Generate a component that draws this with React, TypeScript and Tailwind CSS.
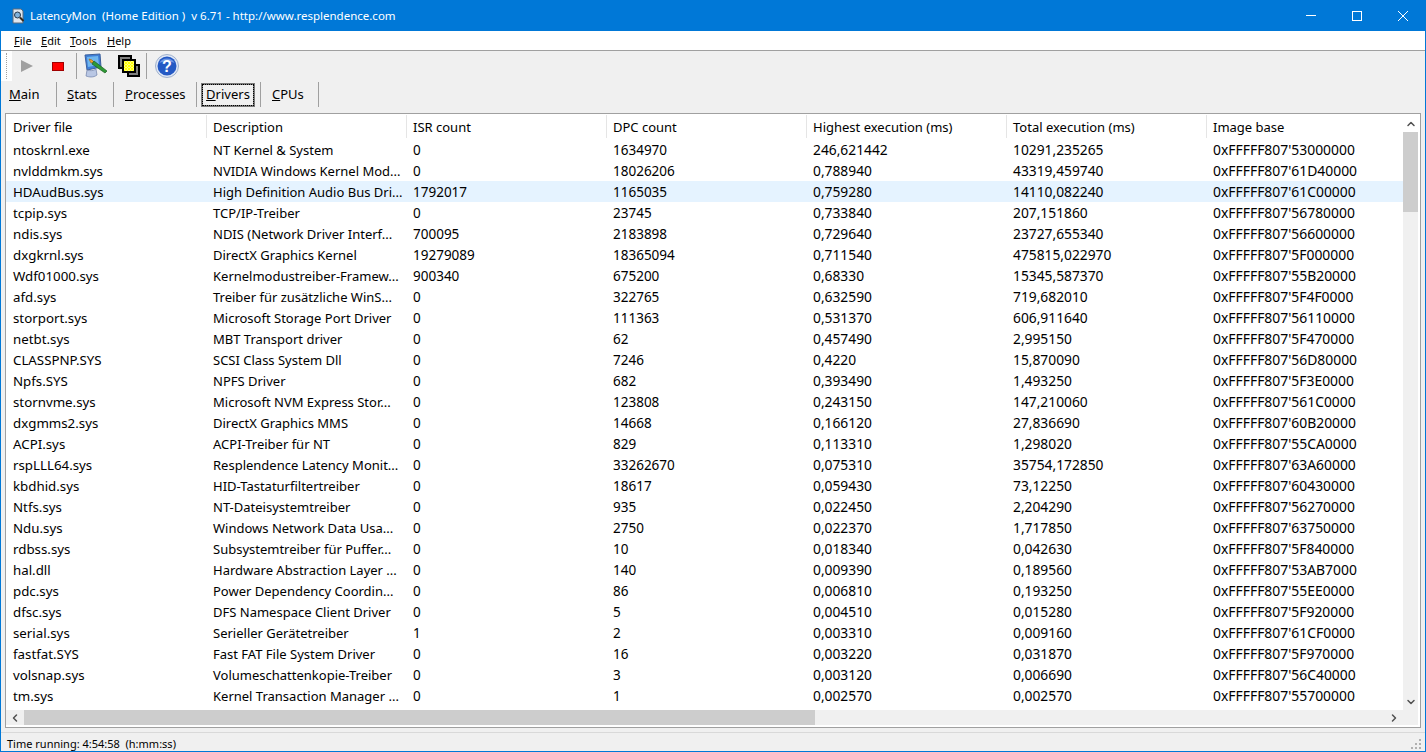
import { ChevronDown, ChevronLeft, ChevronRight, ChevronUp } from "lucide-react";

type Driver = [string, string, string, string, string, string, string];

const drivers: Driver[] = [
  ["ntoskrnl.exe", "NT Kernel & System", "0", "1634970", "246,621442", "10291,235265", "0xFFFFF807'53000000"],
  ["nvlddmkm.sys", "NVIDIA Windows Kernel Mod...", "0", "18026206", "0,788940", "43319,459740", "0xFFFFF807'61D40000"],
  ["HDAudBus.sys", "High Definition Audio Bus Dri...", "1792017", "1165035", "0,759280", "14110,082240", "0xFFFFF807'61C00000"],
  ["tcpip.sys", "TCP/IP-Treiber", "0", "23745", "0,733840", "207,151860", "0xFFFFF807'56780000"],
  ["ndis.sys", "NDIS (Network Driver Interf...", "700095", "2183898", "0,729640", "23727,655340", "0xFFFFF807'56600000"],
  ["dxgkrnl.sys", "DirectX Graphics Kernel", "19279089", "18365094", "0,711540", "475815,022970", "0xFFFFF807'5F000000"],
  ["Wdf01000.sys", "Kernelmodustreiber-Framew...", "900340", "675200", "0,68330", "15345,587370", "0xFFFFF807'55B20000"],
  ["afd.sys", "Treiber für zusätzliche WinS...", "0", "322765", "0,632590", "719,682010", "0xFFFFF807'5F4F0000"],
  ["storport.sys", "Microsoft Storage Port Driver", "0", "111363", "0,531370", "606,911640", "0xFFFFF807'56110000"],
  ["netbt.sys", "MBT Transport driver", "0", "62", "0,457490", "2,995150", "0xFFFFF807'5F470000"],
  ["CLASSPNP.SYS", "SCSI Class System Dll", "0", "7246", "0,4220", "15,870090", "0xFFFFF807'56D80000"],
  ["Npfs.SYS", "NPFS Driver", "0", "682", "0,393490", "1,493250", "0xFFFFF807'5F3E0000"],
  ["stornvme.sys", "Microsoft NVM Express Stor...", "0", "123808", "0,243150", "147,210060", "0xFFFFF807'561C0000"],
  ["dxgmms2.sys", "DirectX Graphics MMS", "0", "14668", "0,166120", "27,836690", "0xFFFFF807'60B20000"],
  ["ACPI.sys", "ACPI-Treiber für NT", "0", "829", "0,113310", "1,298020", "0xFFFFF807'55CA0000"],
  ["rspLLL64.sys", "Resplendence Latency Monit...", "0", "33262670", "0,075310", "35754,172850", "0xFFFFF807'63A60000"],
  ["kbdhid.sys", "HID-Tastaturfiltertreiber", "0", "18617", "0,059430", "73,12250", "0xFFFFF807'60430000"],
  ["Ntfs.sys", "NT-Dateisystemtreiber", "0", "935", "0,022450", "2,204290", "0xFFFFF807'56270000"],
  ["Ndu.sys", "Windows Network Data Usa...", "0", "2750", "0,022370", "1,717850", "0xFFFFF807'63750000"],
  ["rdbss.sys", "Subsystemtreiber für Puffer...", "0", "10", "0,018340", "0,042630", "0xFFFFF807'5F840000"],
  ["hal.dll", "Hardware Abstraction Layer ...", "0", "140", "0,009390", "0,189560", "0xFFFFF807'53AB7000"],
  ["pdc.sys", "Power Dependency Coordin...", "0", "86", "0,006810", "0,193250", "0xFFFFF807'55EE0000"],
  ["dfsc.sys", "DFS Namespace Client Driver", "0", "5", "0,004510", "0,015280", "0xFFFFF807'5F920000"],
  ["serial.sys", "Serieller Gerätetreiber", "1", "2", "0,003310", "0,009160", "0xFFFFF807'61CF0000"],
  ["fastfat.SYS", "Fast FAT File System Driver", "0", "16", "0,003220", "0,031870", "0xFFFFF807'5F970000"],
  ["volsnap.sys", "Volumeschattenkopie-Treiber", "0", "3", "0,003120", "0,006690", "0xFFFFF807'56C40000"],
  ["tm.sys", "Kernel Transaction Manager ...", "0", "1", "0,002570", "0,002570", "0xFFFFF807'55700000"],
];

const headers = ["Driver file", "Description", "ISR count", "DPC count", "Highest execution (ms)", "Total execution (ms)", "Image base"];

// letters run narrower than digits in the original font, so sizes differ per column
const cellClass = [
  "pl-[7px] text-[13.3px]",
  "pl-[7px] text-[13px]",
  "pl-[7px] text-[13.5px]",
  "pl-[7px] text-[13.5px]",
  "pl-[7px] text-[13.8px]",
  "pl-[7px] text-[13.8px]",
  "pl-[7px] text-[13.9px]",
];

const AppIcon = () => (
  <svg width="16" height="16" viewBox="0 0 16 16">
    <path d="M3 1h8l2 2v12H3z" fill="#dfe6ee" stroke="#5b6b7c" />
    <circle cx="7.5" cy="7" r="3" fill="#7fb2dc" stroke="#26384a" />
    <path d="M10 9.5l3.5 3.5" stroke="#3a2a1a" strokeWidth="2" />
  </svg>
);

const MonitorIcon = () => (
  <svg width="26" height="26" viewBox="0 0 26 26">
    <path d="M2 2l15-1 1 13-14 3z" fill="#3f7fd8" stroke="#3b5f9b" />
    <path d="M4 4l11-1 1 9-11 2z" fill="#6fb6ee" />
    <path d="M4 17c3 1 6 1 9-1l1 6c-4 3-8 2-11 1z" fill="#b9c7e4" stroke="#6f80a8" strokeWidth="0.7" />
    <path d="M6 6l3 1 2 2-3 1z" fill="#f3a628" stroke="#a8651a" strokeWidth="0.7" />
    <path d="M11 8l13 10-2 2L9 11z" fill="#2e9a35" stroke="#1c5f22" strokeWidth="0.7" />
  </svg>
);

const WindowsIcon = () => (
  <svg width="22" height="22" viewBox="0 0 22 22">
    <rect x="1" y="1" width="12" height="12" fill="#808080" stroke="#000" strokeWidth="2" />
    <rect x="10" y="10" width="11" height="11" fill="#808080" stroke="#000" strokeWidth="2" />
    <rect x="5" y="5" width="12" height="12" fill="#ffff00" stroke="#000" strokeWidth="2" />
    <path d="M8 6v10M11 6v10M14 6v10M6 8h10M6 11h10M6 14h10" stroke="#fff" strokeWidth="1" strokeDasharray="1 2" />
  </svg>
);

const HelpIcon = () => (
  <svg width="24" height="24" viewBox="0 0 24 24">
    <circle cx="12" cy="12" r="11.5" fill="#dfe7f5" stroke="#9fb0cc" />
    <circle cx="12" cy="12" r="9.5" fill="#2459c4" />
    <path d="M4.5 9a8 7 0 0 1 15 0c-4-2-11-2-15 0z" fill="#6f98e6" />
    <text x="12" y="18" textAnchor="middle" fill="#fff" fontSize="16" fontWeight="700" fontFamily="'Liberation Sans', sans-serif">?</text>
  </svg>
);

export default function App() {
  return (
    <div className="flex h-[752px] w-[1426px] flex-col overflow-hidden border border-[#0078d7] bg-[#f0f0f0] font-['Noto_Sans',sans-serif] text-[13px] leading-none text-black">
      {/* Title bar */}
      <div className="-mx-px -mt-px flex h-[31px] shrink-0 items-center bg-[#0078d7] text-white">
        <div className="ml-[10px] mr-[4px]"><AppIcon /></div>
        <span className="flex-1 whitespace-pre text-[11.5px]">LatencyMon  (Home Edition )  v 6.71 - http://www.resplendence.com</span>
        <div className="flex h-full">
          <div className="flex w-[46px] items-center justify-center"><div className="h-px w-[10px] bg-white" /></div>
          <div className="flex w-[46px] items-center justify-center"><div className="h-[10px] w-[10px] border border-white" /></div>
          <div className="flex w-[46px] items-center justify-center">
            <svg width="10" height="10" viewBox="0 0 10 10"><path d="M0 0l10 10M10 0L0 10" stroke="#fff" strokeWidth="1" /></svg>
          </div>
        </div>
      </div>

      {/* Menu */}
      <div className="-mx-px box-content flex h-[19px] shrink-0 items-center border-b border-[#a0a0a0] bg-white pl-[14px] text-[11px]">
        <span className="w-[27px]"><u>F</u>ile</span>
        <span className="w-[29px]"><u>E</u>dit</span>
        <span className="w-[37px]"><u>T</u>ools</span>
        <span><u>H</u>elp</span>
      </div>

      {/* Toolbar */}
      <div className="flex h-[30px] shrink-0 items-center">
        <div className="flex h-full w-[11px] flex-col items-center justify-center bg-white">
          <div className="h-[26px] w-px border-l border-dotted border-[#a0a0a0]" />
        </div>
        <div className="flex h-full w-[30px] items-center justify-center">
          <svg width="12" height="12" viewBox="0 0 12 12"><path d="M0 0l12 6-12 6z" fill="#a0a0a0" /></svg>
        </div>
        <div className="flex w-[32px] items-center justify-center">
          <div className="h-[9px] w-[12px] border border-[#a00000] bg-[#ff0000]" />
        </div>
        <div className="ml-[2px] h-[26px] w-px bg-[#a0a0a0]" />
        <div className="ml-[6px]"><MonitorIcon /></div>
        <div className="ml-[9px]"><WindowsIcon /></div>
        <div className="ml-[6px] h-[26px] w-px bg-[#a0a0a0]" />
        <div className="ml-[8px]"><HelpIcon /></div>
      </div>

      {/* Tabs */}
      <div className="flex h-[27px] shrink-0 items-center pl-[8px] text-[13px]">
        <div className="flex w-[47px] items-center"><u>M</u>ain</div>
        <div className="h-[25px] w-px bg-[#a0a0a0]" />
        <div className="flex w-[56px] items-center pl-[10px]"><u>S</u>tats</div>
        <div className="h-[25px] w-px bg-[#a0a0a0]" />
        <div className="flex w-[82px] items-center pl-[11px]"><u>P</u>rocesses</div>
        <div className="h-[25px] w-px bg-[#a0a0a0]" />
        <div className="ml-[4px] flex h-[24px] w-[54px] items-center justify-center border-2 border-[#7a7a7a] outline-1 -outline-offset-2 outline-black outline-dotted"><u>D</u>rivers</div>
        <div className="ml-[5px] h-[25px] w-px bg-[#a0a0a0]" />
        <div className="flex w-[57px] items-center pl-[11px]"><u>C</u>PUs</div>
        <div className="h-[25px] w-px bg-[#a0a0a0]" />
      </div>

      {/* List view */}
      <div className="mx-[4px] mt-[5px] flex h-[615px] shrink-0 flex-col border border-[#a0a0a0] bg-white pr-[2px] pb-[2px]">
        <div className="flex min-h-0 flex-1">
          <div className="min-w-0 flex-1 overflow-hidden">
            <div className="flex h-[25px] pt-px">
              {headers.map((header, i) => (
                <div
                  key={header}
                  className={`flex h-[23px] w-[200px] shrink-0 items-center pt-px ${i === 0 ? "pl-[7px]" : "border-l border-[#e5e5e5] pl-[6px]"}`}
                >
                  {header}
                </div>
              ))}
            </div>
            {drivers.map((row, r) => (
              <div key={row[0]} className={`flex h-[21px] items-baseline whitespace-nowrap ${r === 2 ? "bg-[#e5f3ff]" : ""}`}>
                {row.map((cell, c) => (
                  <div key={c} className={`w-[200px] shrink-0 leading-[22px] ${cellClass[c]}`}>{cell}</div>
                ))}
              </div>
            ))}
          </div>

          {/* Vertical scrollbar */}
          <div className="flex w-[15px] shrink-0 flex-col bg-[#f0f0f0]">
            <div className="flex h-[18px] items-center justify-center bg-white pt-px"><ChevronUp size={12} strokeWidth={3} color="#505050" /></div>
            <div className="h-[80px] bg-[#cdcdcd]" />
            <div className="flex-1" />
            <div className="flex h-[17px] items-center justify-center"><ChevronDown size={12} strokeWidth={3} color="#505050" /></div>
          </div>
        </div>

        {/* Horizontal scrollbar */}
        <div className="flex h-[15px] shrink-0 bg-[#f0f0f0]">
          <div className="flex w-[18px] items-center justify-center"><ChevronLeft size={12} strokeWidth={3} color="#505050" /></div>
          <div className="w-[791px] bg-[#cdcdcd]" />
          <div className="flex-1" />
          <div className="flex w-[18px] items-center justify-center"><ChevronRight size={12} strokeWidth={3} color="#505050" /></div>
          <div className="w-[15px]" />
        </div>
      </div>

      {/* Status bar */}
      <div className="mt-[4px] flex flex-1 items-center justify-between border-t border-[#d9d9d9] pl-[6px] pt-[2px] text-[11px] whitespace-pre">
        <span>Time running: 4:54:58  (h:mm:ss)</span>
        <svg width="12" height="12" viewBox="0 0 12 12" className="mr-[2px] self-end" fill="#b0b0b0">
          <rect x="8" y="0" width="2" height="2" />
          <rect x="4" y="4" width="2" height="2" />
          <rect x="8" y="4" width="2" height="2" />
          <rect x="0" y="8" width="2" height="2" />
          <rect x="4" y="8" width="2" height="2" />
          <rect x="8" y="8" width="2" height="2" />
        </svg>
      </div>
    </div>
  );
}
